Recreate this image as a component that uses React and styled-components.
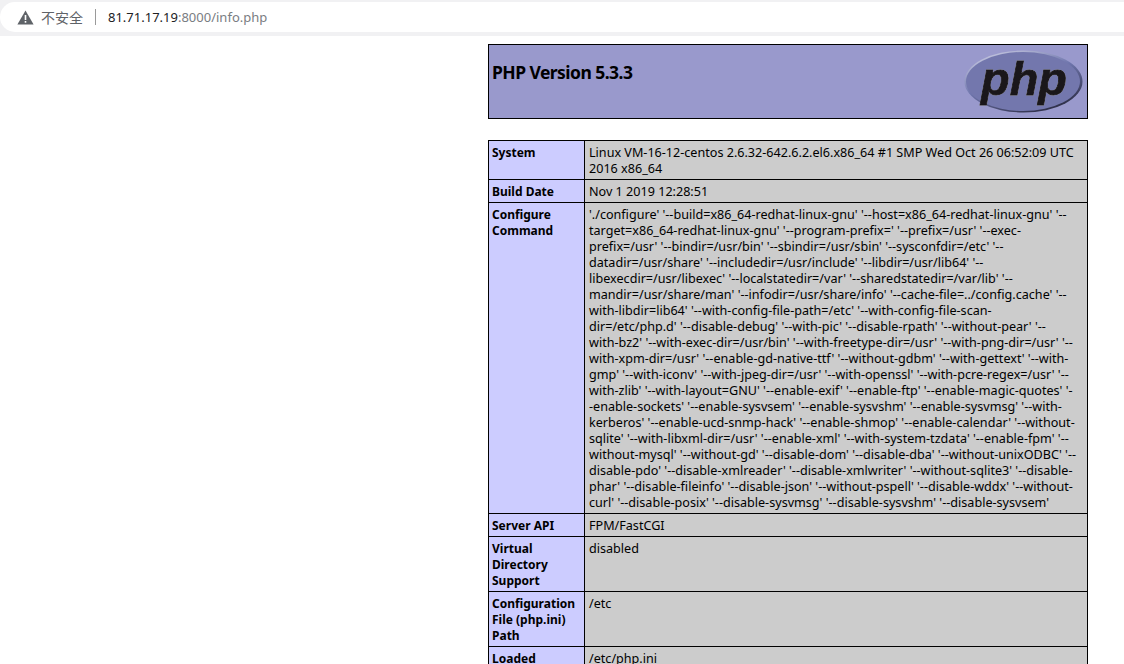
import styled, { createGlobalStyle } from "styled-components";

const GlobalStyle = createGlobalStyle`
  html, body {
    margin: 0;
    padding: 0;
    height: 664px;
    overflow: hidden;
    background: #fff;
  }
`;

const Page = styled.div`
  width: 1124px;
  height: 664px;
  overflow: hidden;
  display: flex;
  flex-direction: column;
  font-family: "Noto Sans", "Noto Sans CJK SC", sans-serif;
`;

const BrowserBar = styled.div`
  height: 36px;
  flex: none;
  box-sizing: border-box;
  background: #f1f1f3;
  padding-top: 2px;
  padding-bottom: 4px;
`;

const AddressPill = styled.div`
  height: 30px;
  width: 1140px;
  background: #fff;
  border-radius: 15px;
  display: flex;
  align-items: center;
  padding-left: 17px;
  font-size: 13px;
`;

const Insecure = styled.span`
  color: #5f6368;
  margin-left: 7px;
  font-size: 14px;
`;

const Divider = styled.span`
  width: 1px;
  height: 16px;
  background: #9a9a9a;
  margin: 0 12px;
`;

const Host = styled.span`
  color: #202124;
`;

const UrlRest = styled.span`
  color: #7a7d82;
`;

const Content = styled.main`
  width: 600px;
  margin: 8px 0 0 488px;
  color: #000;
  font-size: 12px;
  line-height: 16px;
`;

const Banner = styled.div`
  height: 75px;
  box-sizing: border-box;
  border: 1px solid #000;
  background: #9999cc;
  display: flex;
  justify-content: space-between;
  padding: 5px 3px 0 3px;
  margin-bottom: 21px;
`;

const Title = styled.h1`
  margin: 10px 0 0;
  font-size: 17.5px;
  letter-spacing: -0.55px;
  line-height: 24px;
  font-weight: 700;
`;

const Table = styled.table`
  width: 600px;
  table-layout: fixed;
  border-collapse: collapse;
  border-spacing: 0;
`;

const LabelCol = styled.col`
  width: 96px;
`;

const Label = styled.td`
  box-sizing: border-box;
  border: 1px solid #000;
  background: #ccccff;
  font-weight: 700;
  vertical-align: top;
  padding: 4px 3px 2px 3px;
`;

const Value = styled.td`
  border: 1px solid #000;
  background: #cccccc;
  vertical-align: top;
  padding: 4px 3px 2px 4px;
  font-size: 12.6px;
  white-space: nowrap;
  overflow: hidden;
`;

const Line = styled.div`
  white-space: nowrap;
`;

const LogoText = styled.text`
  font-family: "Liberation Sans", sans-serif;
  font-size: 47px;
  font-weight: 700;
  font-style: italic;
  fill: #1a171b;
  stroke: #1a171b;
  stroke-width: 0.9;
  filter: drop-shadow(0 0 0.7px #f2f2fa);
`;

function WarningIcon() {
  return (
    <svg width="17" height="15" viewBox="0 0 17 15">
      <path d="M8.5 0.5 L16.6 14.5 L0.4 14.5 Z" fill="#5f6368" />
      <rect x="7.7" y="5" width="1.6" height="5" fill="#fff" />
      <rect x="7.7" y="11" width="1.6" height="1.7" fill="#fff" />
    </svg>
  );
}

function PhpLogo() {
  return (
    <svg width="120" height="64" viewBox="0 0 120 64">
      <defs>
        <linearGradient id="rim" x1="0.2" y1="0" x2="0.8" y2="1">
          <stop offset="0" stopColor="#c9cbe2" />
          <stop offset="0.45" stopColor="#6f76ad" />
          <stop offset="1" stopColor="#26263c" />
        </linearGradient>
      </defs>
      <ellipse cx="59.5" cy="31.5" rx="59" ry="31" fill="url(#rim)" />
      <ellipse cx="59" cy="31.5" rx="57" ry="29.5" fill="#7377ad" />
      <LogoText x="17" y="45" textLength="86" lengthAdjust="spacingAndGlyphs">php</LogoText>
    </svg>
  );
}

const configureLines = [
  "'./configure' '--build=x86_64-redhat-linux-gnu' '--host=x86_64-redhat-linux-gnu' '--",
  "target=x86_64-redhat-linux-gnu' '--program-prefix=' '--prefix=/usr' '--exec-",
  "prefix=/usr' '--bindir=/usr/bin' '--sbindir=/usr/sbin' '--sysconfdir=/etc' '--",
  "datadir=/usr/share' '--includedir=/usr/include' '--libdir=/usr/lib64' '--",
  "libexecdir=/usr/libexec' '--localstatedir=/var' '--sharedstatedir=/var/lib' '--",
  "mandir=/usr/share/man' '--infodir=/usr/share/info' '--cache-file=../config.cache' '--",
  "with-libdir=lib64' '--with-config-file-path=/etc' '--with-config-file-scan-",
  "dir=/etc/php.d' '--disable-debug' '--with-pic' '--disable-rpath' '--without-pear' '--",
  "with-bz2' '--with-exec-dir=/usr/bin' '--with-freetype-dir=/usr' '--with-png-dir=/usr' '--",
  "with-xpm-dir=/usr' '--enable-gd-native-ttf' '--without-gdbm' '--with-gettext' '--with-",
  "gmp' '--with-iconv' '--with-jpeg-dir=/usr' '--with-openssl' '--with-pcre-regex=/usr' '--",
  "with-zlib' '--with-layout=GNU' '--enable-exif' '--enable-ftp' '--enable-magic-quotes' '-",
  "-enable-sockets' '--enable-sysvsem' '--enable-sysvshm' '--enable-sysvmsg' '--with-",
  "kerberos' '--enable-ucd-snmp-hack' '--enable-shmop' '--enable-calendar' '--without-",
  "sqlite' '--with-libxml-dir=/usr' '--enable-xml' '--with-system-tzdata' '--enable-fpm' '--",
  "without-mysql' '--without-gd' '--disable-dom' '--disable-dba' '--without-unixODBC' '--",
  "disable-pdo' '--disable-xmlreader' '--disable-xmlwriter' '--without-sqlite3' '--disable-",
  "phar' '--disable-fileinfo' '--disable-json' '--without-pspell' '--disable-wddx' '--without-",
  "curl' '--disable-posix' '--disable-sysvmsg' '--disable-sysvshm' '--disable-sysvsem'",
];

const rows = [
  {
    label: ["System"],
    value: [
      "Linux VM-16-12-centos 2.6.32-642.6.2.el6.x86_64 #1 SMP Wed Oct 26 06:52:09 UTC",
      "2016 x86_64",
    ],
  },
  { label: ["Build Date"], value: ["Nov 1 2019 12:28:51"] },
  { label: ["Configure", "Command"], value: configureLines },
  { label: ["Server API"], value: ["FPM/FastCGI"] },
  { label: ["Virtual", "Directory", "Support"], value: ["disabled"] },
  { label: ["Configuration", "File (php.ini)", "Path"], value: ["/etc"] },
  { label: ["Loaded", "Configuration", "File"], value: ["/etc/php.ini"] },
];

export default function App() {
  return (
    <Page>
      <GlobalStyle />
      <BrowserBar>
        <AddressPill>
          <WarningIcon />
          <Insecure>不安全</Insecure>
          <Divider />
          <span>
            <Host>81.71.17.19</Host>
            <UrlRest>:8000/info.php</UrlRest>
          </span>
        </AddressPill>
      </BrowserBar>
      <Content>
        <Banner>
          <Title>PHP Version 5.3.3</Title>
          <PhpLogo />
        </Banner>
        <Table>
          <colgroup>
            <LabelCol />
            <col />
          </colgroup>
          <tbody>
            {rows.map((row) => (
              <tr key={row.label.join(" ")}>
                <Label>
                  {row.label.map((text) => (
                    <Line key={text}>{text}</Line>
                  ))}
                </Label>
                <Value>
                  {row.value.map((text) => (
                    <Line key={text}>{text}</Line>
                  ))}
                </Value>
              </tr>
            ))}
          </tbody>
        </Table>
      </Content>
    </Page>
  );
}
